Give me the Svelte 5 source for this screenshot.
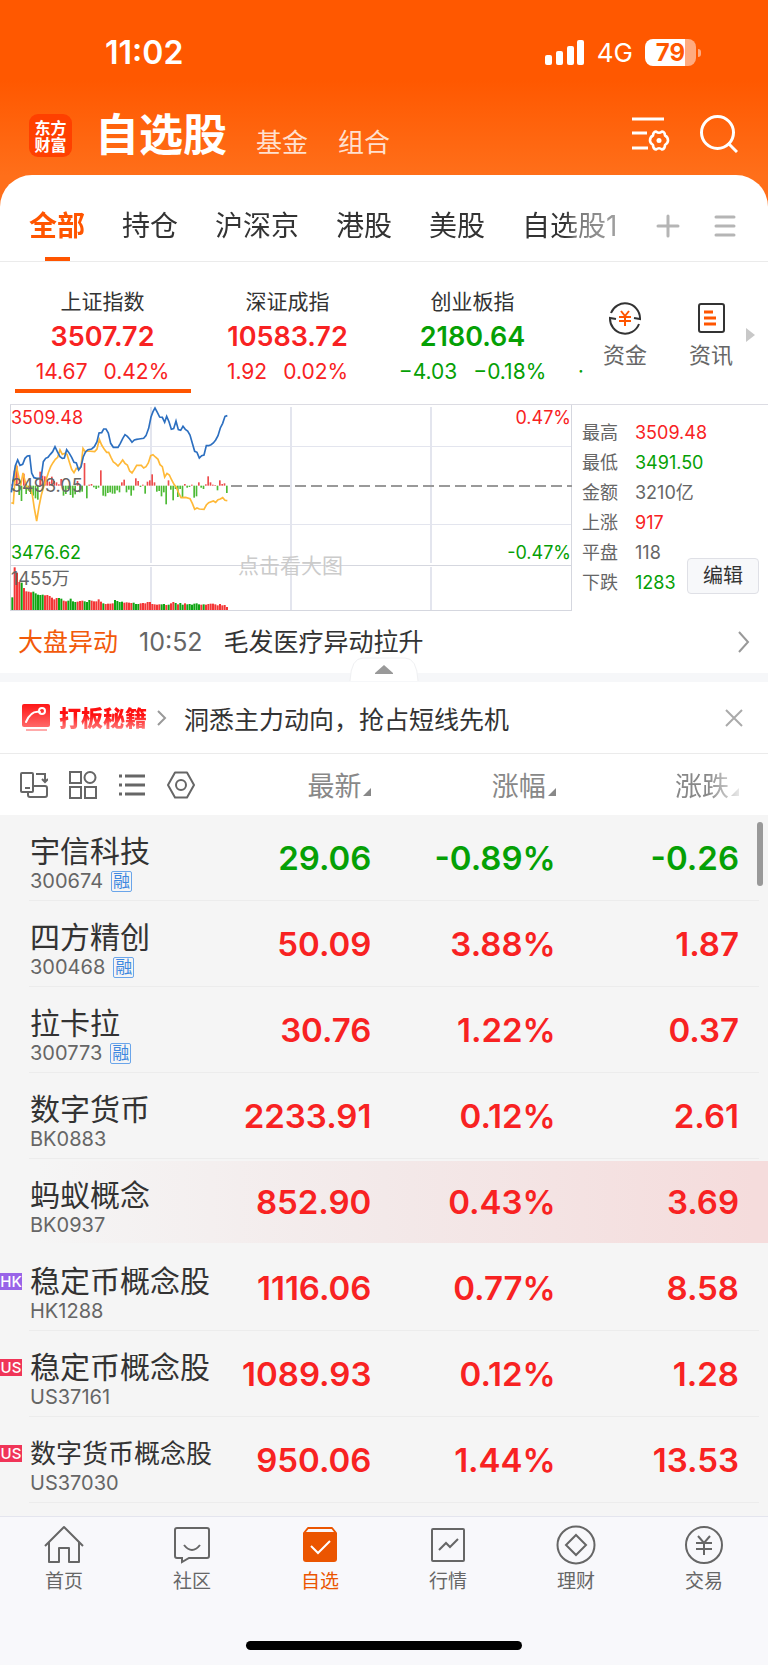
<script>
    let tabs = ["全部", "持仓", "沪深京", "港股", "美股", "自选股1"];
    let activeTab = "全部";

    let indexes = [
        { name: "上证指数", value: "3507.72", change: "14.67", percent: "0.42%", trend: "up" },
        { name: "深证成指", value: "10583.72", change: "1.92", percent: "0.02%", trend: "up" },
        { name: "创业板指", value: "2180.64", change: "−4.03", percent: "−0.18%", trend: "down" },
    ];
    let activeIndex = "上证指数";

    let stats = [
        { label: "最高", value: "3509.48", trend: "up" },
        { label: "最低", value: "3491.50", trend: "down" },
        { label: "金额", value: "3210亿", trend: "flat" },
        { label: "上涨", value: "917", trend: "up" },
        { label: "平盘", value: "118", trend: "flat" },
        { label: "下跌", value: "1283", trend: "down" },
    ];

    let columns = ["最新", "涨幅", "涨跌"];

    let stocks = [
        { name: "宇信科技", code: "300674", margin: true, last: "29.06", percent: "-0.89%", change: "-0.26" },
        { name: "四方精创", code: "300468", margin: true, last: "50.09", percent: "3.88%", change: "1.87" },
        { name: "拉卡拉", code: "300773", margin: true, last: "30.76", percent: "1.22%", change: "0.37" },
        { name: "数字货币", code: "BK0883", last: "2233.91", percent: "0.12%", change: "2.61" },
        { name: "蚂蚁概念", code: "BK0937", last: "852.90", percent: "0.43%", change: "3.69", flash: true },
        { name: "稳定币概念股", code: "HK1288", market: "HK", last: "1116.06", percent: "0.77%", change: "8.58" },
        { name: "稳定币概念股", code: "US37161", market: "US", last: "1089.93", percent: "0.12%", change: "1.28" },
        { name: "数字货币概念股", code: "US37030", market: "US", last: "950.06", percent: "1.44%", change: "13.53" },
    ];

    // the chart is plotted on a fine grid, three units to a pixel
    let priceLine =
        "34,292 40,250 46,212 53,195 60,211 68,208 75,190 82,183 89,182 95,234 102,248 110,250 123,250 130,200 137,190 144,187 151,178 158,170 165,155 172,170 180,185 187,190 193,189 200,164 208,175 215,187 222,202 229,204 236,225 243,216 250,185 257,170 264,164 275,162 283,155 291,140 297,114 305,113 311,102 318,102 325,114 332,145 340,157 354,157 361,145 368,131 375,119 382,124 389,132 396,142 403,135 410,133 417,132 431,130 438,122 446,100 453,66 459,50 465,39 472,52 479,66 487,67 494,82 500,64 507,80 514,103 521,101 528,78 535,104 542,106 549,94 556,103 563,108 570,120 577,145 584,169 591,172 598,189 605,182 612,180 619,152 626,152 633,149 640,144 647,135 654,122 661,99 668,85 675,64 682,62";
    let averageLine =
        "34,323 40,325 48,208 55,240 62,272 69,234 76,262 83,280 90,275 97,300 103,340 110,378 117,335 124,300 131,275 138,255 145,233 152,215 159,203 166,193 173,187 180,165 187,178 194,175 201,178 208,201 215,223 222,233 229,220 236,222 243,214 249,160 256,171 263,168 284,170 291,162 298,133 305,150 313,163 320,172 326,172 333,187 340,201 347,206 354,213 361,205 368,195 375,205 382,210 389,228 396,234 403,223 410,211 424,211 431,219 438,215 445,204 452,182 459,179 466,186 474,193 480,209 487,215 494,246 501,235 508,240 515,255 522,268 529,277 536,294 543,308 557,307 570,311 577,325 584,343 591,339 598,342 612,343 619,330 626,323 640,318 647,322 654,314 661,312 668,308 675,316 682,317";

    let macd = [
        4, 45, 60, -28, -46, 36, -25, -15, -25, -30, -38, -42, 42, 30, 28, 15, 12, 27, 14, 10, 4,
        20, -30, -25, -10, -28, -36, -26, 14, -20, -18, 68, -38, 3, 5, -5, -10, -6, 46, -30, -32, -22,
        -20, -24, -24, -14, -20, 10, 18, -20, -12, -30, -14, 22, 14, -4, 3, -24, 12, 16, 34, 10, -18,
        -16, -32, -20, -56, 16, -12, -44, -10, -34, -10, -36, 5, -6, -4, 3, -36, -32, 10, -6, -10, 4,
        28, 10, 3, 2, -14, 16, 5, 7, -22,
    ];

    let volume = [
        38, 128, 112, 84, 82, 66, 56, 55, 53, 55, 50, 46, 45, 46, 44, 45, 42, 37, 32, 36, 36, 34, 28,
        26, 28, 34, 26, 24, 25, 27, 28, 26, 24, 30, 28, 26, 26, 32, 25, 20, 18, 19, 19, 20, 30, 27,
        24, 25, 22, 23, 22, 21, 22, 18, 18, 20, 21, 20, 24, 24, 18, 17, 16, 17, 17, 18, 15, 16, 20,
        24, 21, 17, 21, 16, 20, 17, 18, 16, 19, 20, 17, 16, 17, 16, 18, 19, 19, 17, 14, 18, 14, 15, 9,
    ];
    let volumeColors =
        "grrrgrrrrgggggrrrrrrggrrggggrrrgggrrrrrgrrrrggggrrrrgggrrrrrrrrrggrgrrgrggrggggggrgrrrrrrrrrr";

    let nav = ["首页", "社区", "自选", "行情", "理财", "交易"];
    let activeNav = "自选";
</script>

<div class="app">
    <header>
        <div class="status">
            <span class="clock">11:02</span>
            <div class="signals">
                <svg width="40" height="26" viewBox="0 0 40 26" fill="#fff">
                    <rect x="0" y="15" width="7" height="10" rx="2" />
                    <rect x="11" y="11" width="7" height="14" rx="2" />
                    <rect x="22" y="6" width="7" height="19" rx="2" />
                    <rect x="32" y="0" width="7" height="25" rx="2" />
                </svg>
                <span class="network">4G</span>
                <div class="battery"><span>79</span></div>
            </div>
        </div>
        <div class="title-row">
            <div class="logo">东方<br />财富</div>
            <h1>自选股</h1>
            <a href="#fund">基金</a>
            <a href="#group">组合</a>
            <div class="tools">
                <button aria-label="设置">
                    <svg width="38" height="36" viewBox="0 0 38 36" fill="none" stroke="#fff" stroke-width="3">
                        <path d="M0 3h32M0 17h15M0 32h16" />
                        <path
                            d="M24 15.500Q27 18 30 15.500Q33 16 33 19.500Q36 21 36 24.500Q36 27 33 29Q33 33 30 33.500Q27 31 24 33.500Q21 33 21 29Q18 27 18 24.500Q18 21 21 19.500Q21 16 24 15.500Z"
                            stroke-width="2.600"
                            stroke-linejoin="round"
                        />
                        <circle cx="27" cy="24.500" r="2.500" fill="#fff" stroke="none" />
                    </svg>
                </button>
                <button aria-label="搜索">
                    <svg width="38" height="38" viewBox="0 0 38 38" fill="none" stroke="#fff" stroke-width="3">
                        <circle cx="17.500" cy="17.500" r="16" />
                        <path d="M28 28l9 9" />
                    </svg>
                </button>
            </div>
        </div>
    </header>

    <main>
        <div class="tabs">
            <nav>
                {#each tabs as tab}
                    <button class:active={tab === activeTab} on:click={() => (activeTab = tab)}>{tab}</button>
                {/each}
            </nav>
            <button aria-label="添加">
                <svg width="24" height="24" viewBox="0 0 24 24" stroke="#b5b5b5" stroke-width="3" stroke-linecap="round">
                    <path d="M12 2v20M2 12h20" />
                </svg>
            </button>
            <button aria-label="管理">
                <svg width="24" height="24" viewBox="0 0 24 24" stroke="#b5b5b5" stroke-width="3" stroke-linecap="round">
                    <path d="M3 3h18M3 12h18M3 21h18" />
                </svg>
            </button>
        </div>

        <section class="indexes">
            <div class="index-list">
                {#each indexes as item}
                    <button class="index" class:active={item.name === activeIndex} on:click={() => (activeIndex = item.name)}>
                        <span class="index-name">{item.name}</span>
                        <strong class={item.trend}>{item.value}</strong>
                        <span class="index-change {item.trend}">
                            <span>{item.change}</span>
                            <span>{item.percent}</span>
                        </span>
                    </button>
                {/each}
                <span class="more down">·</span>
            </div>
            <div class="shortcuts">
                <a href="#money">
                    <svg width="34" height="34" viewBox="0 0 34 34" fill="none" stroke="#333" stroke-width="2">
                        <path d="M3 12A15 15 0 0 1 32 17V18L26 17" />
                        <path d="M8 18L2 17A15 15 0 0 0 31 23" />
                        <path d="M13 10l4 5 4-5M11 16h12M11 20h12M17 15v10" stroke="#ff5500" />
                    </svg>
                    资金
                </a>
                <a href="#news">
                    <svg width="34" height="34" viewBox="0 0 34 34" fill="none" stroke="#333" stroke-width="2">
                        <rect x="5" y="3" width="25" height="28" rx="2" />
                        <path d="M10 11h9M10 17h12M10 23h12" stroke="#ff5500" stroke-width="3" />
                    </svg>
                    资讯
                </a>
            </div>
            <svg class="caret" width="10" height="14" viewBox="0 0 10 14"><path d="M0 0l9 7-9 7z" fill="#c8c8c8" /></svg>
        </section>

        <section class="market">
            <svg class="chart" viewBox="0 0 562 206">
                <g stroke="#e3e5ee" fill="none">
                    <path d="M0 41.500H562M0 119.500H562" />
                    <path d="M141 2V158M281 2V158M421 2V158M141 162V205M281 162V205M421 162V205" stroke-width="2" />
                    <path d="M0 160.500H562M0 205.500H562M.5 0V206M561.500 0V206" stroke="#d5d7df" />
                </g>
                <text x="228" y="168" font-size="21" fill="#cbcbcb">点击看大图</text>
                <path d="M221 81H562" stroke="#999" stroke-width="2" stroke-dasharray="11 5" />
                <g transform="translate(-10 -10) scale(0.333333)">
                    {#each macd as value, i}
                        <rect
                            x={34 + i * 7}
                            y={value > 0 ? 272 - value : 272}
                            width="5"
                            height={Math.abs(value)}
                            fill={value > 0 ? "#ee4b4b" : "#4dba35"}
                        />
                    {/each}
                    {#each volume as value, i}
                        <rect
                            x={34 + i * 7}
                            y={645 - value}
                            width="6"
                            height={value}
                            fill={volumeColors[i] === "g" ? "#0fa513" : "#f43636"}
                        />
                    {/each}
                    <polyline points={averageLine} fill="none" stroke="#ffb938" stroke-width="5" />
                    <polyline points={priceLine} fill="none" stroke="#2c6fc0" stroke-width="5" />
                </g>
                <g font-size="18">
                    <text x="1" y="19" fill="#f82222">3509.48</text>
                    <text x="1" y="87" fill="#666">3493.05</text>
                    <text x="1" y="154" fill="#05a005">3476.62</text>
                    <text x="1" y="180" fill="#666">1455万</text>
                    <text x="561" y="19" fill="#f82222" text-anchor="end">0.47%</text>
                    <text x="561" y="154" fill="#05a005" text-anchor="end">-0.47%</text>
                </g>
            </svg>
            <div class="stats">
                <dl>
                    {#each stats as stat}
                        <dt>{stat.label}</dt>
                        <dd class={stat.trend}>{stat.value}</dd>
                    {/each}
                </dl>
                <button class="edit">编辑</button>
            </div>
        </section>

        <section class="news">
            <a href="#alert">
                <span class="news-tag">大盘异动</span>
                <time>10:52</time>
                <span>毛发医疗异动拉升</span>
            </a>
            <svg width="12" height="22" viewBox="0 0 12 22" fill="none" stroke="#999" stroke-width="2"><path d="M1 1l9 10-9 10" /></svg>
            <button class="handle" aria-label="收起">
                <svg width="70" height="25" viewBox="0 0 70 25">
                    <path d="M1 24Q2 1 14 1H56Q68 1 69 24" fill="#fff" stroke="#eff0f2" stroke-width="1" />
                    <path d="M35 8l9 8v1H26v-1z" fill="#999" />
                </svg>
            </button>
        </section>

        <section class="promo">
            <svg width="30" height="28" viewBox="0 0 30 28">
                <defs>
                    <linearGradient id="promo-red" x1="0" y1="0" x2="0" y2="1">
                        <stop offset="0" stop-color="#ff1717" />
                        <stop offset="1" stop-color="#ff6868" />
                    </linearGradient>
                </defs>
                <rect x="1" y="0" width="28" height="23" rx="2" fill="url(#promo-red)" />
                <path d="M5 18Q10 6 19 8" fill="none" stroke="#fff" stroke-width="2" stroke-linecap="round" />
                <circle cx="21" cy="7" r="3" fill="none" stroke="#fff" stroke-width="2" />
                <path d="M5 26h21" stroke="#ffaaaa" stroke-width="2" />
            </svg>
            <strong>打板秘籍</strong>
            <svg width="10" height="18" viewBox="0 0 10 18" fill="none" stroke="#999" stroke-width="2"><path d="M1 2l7 7-7 7" /></svg>
            <a href="#promo">洞悉主力动向，抢占短线先机</a>
            <button aria-label="关闭">
                <svg width="18" height="18" viewBox="0 0 18 18" stroke="#aaa" stroke-width="2"><path d="M1 1l16 16M17 1L1 17" /></svg>
            </button>
        </section>

        <section class="watchlist">
            <table>
                <thead>
                    <tr>
                        <th class="name-col">
                            <div class="views">
                                <button aria-label="横屏">
                                    <svg width="28" height="28" viewBox="0 0 28 28" fill="none" stroke="#666" stroke-width="2">
                                        <rect x="1" y="2" width="12" height="19" rx="1" />
                                        <path d="M5 17h5M16 3h9v8M22 8l3 3 3-3M13 15h12q2 0 2 2v7q0 2-2 2H10q-2 0-2-2v-3" />
                                    </svg>
                                </button>
                                <button aria-label="宫格">
                                    <svg width="28" height="28" viewBox="0 0 28 28" fill="none" stroke="#666" stroke-width="2">
                                        <rect x="1" y="1" width="11" height="11" />
                                        <circle cx="21" cy="6.500" r="5.500" />
                                        <rect x="1" y="16" width="11" height="11" />
                                        <rect x="16" y="16" width="11" height="11" />
                                    </svg>
                                </button>
                                <button aria-label="列表">
                                    <svg width="28" height="28" viewBox="0 0 28 28" stroke="#666" stroke-width="3">
                                        <path d="M7 5h20M7 14h20M7 23h20" />
                                        <path d="M1 5h3M1 14h3M1 23h3" />
                                    </svg>
                                </button>
                                <button aria-label="设置">
                                    <svg width="28" height="28" viewBox="0 0 28 28" fill="none" stroke="#666" stroke-width="2">
                                        <path d="M8 1.500h12l7 12.500-7 12.500H8L1 14z" stroke-linejoin="round" />
                                        <circle cx="14" cy="14" r="5" />
                                    </svg>
                                </button>
                            </div>
                        </th>
                        {#each columns as column}
                            <th><button class="sort">{column}<i></i></button></th>
                        {/each}
                    </tr>
                </thead>
                <tbody>
                    {#each stocks as stock}
                        <tr class:flash={stock.flash}>
                            <td>
                                {#if stock.market}
                                    <span class="market-tag {stock.market}">{stock.market}</span>
                                {/if}
                                <div class="name" class:long={stock.name.length > 6}>{stock.name}</div>
                                <div class="code">
                                    {stock.code}
                                    {#if stock.margin}<span class="margin-tag">融</span>{/if}
                                </div>
                            </td>
                            {#each [stock.last, stock.percent, stock.change] as value}
                                <td class="value {stock.change[0] === '-' ? 'down' : 'up'}">{value}</td>
                            {/each}
                        </tr>
                    {/each}
                </tbody>
            </table>
            <div class="scrollbar"></div>
        </section>
    </main>

    <footer>
        <nav>
            {#each nav as item, i}
                <a href="#{i}" class:active={item === activeNav}>
                    <svg width="40" height="40" viewBox="0 0 40 40" fill="none" stroke="currentColor" stroke-width="2">
                        {#if i === 0}
                            <path d="M1 21L20 2l19 19M5 17v20h10V23h10v14h10V17" stroke-linejoin="round" />
                        {:else if i === 1}
                            <path d="M5 3h30q2 0 2 2v26q0 2-2 2H17l-7 4v-4H5q-2 0-2-2V5q0-2 2-2Z" />
                            <path d="M12 20q8 10 16 0" />
                        {:else if i === 2}
                            <path d="M8 3h24l4 5H4z" stroke-linejoin="round" />
                            <path d="M3 8h34v26q0 3-3 3H6q-3 0-3-3z" fill="currentColor" stroke="none" />
                            <path d="M11 21l7 7 12-12" stroke="#fff" />
                        {:else if i === 3}
                            <rect x="4" y="4" width="32" height="32" rx="1" />
                            <path d="M11 25l7-7 4 4 8-8" />
                        {:else if i === 4}
                            <circle cx="20" cy="20" r="18.500" />
                            <path d="M20 10l10 10-10 10-10-10z" />
                        {:else}
                            <circle cx="20" cy="20" r="18" />
                            <path d="M14 11l6 7 6-7M12 18h16M12 24h16M20 18v12" />
                        {/if}
                    </svg>
                    {item}
                </a>
            {/each}
        </nav>
        <div class="home-bar"></div>
    </footer>
</div>

<style>
    :global(body) {
        margin: 0;
        background: #f8f8fb;
    }
    .app {
        font-family: Inter, "Noto Sans CJK SC", sans-serif;
        color: #333;
        background: linear-gradient(#ff5800 80px, #ff6f1a 176px);
    }
    button {
        padding: 0;
        border: 0;
        background: none;
        font: inherit;
        color: inherit;
    }
    a {
        color: inherit;
        text-decoration: none;
    }
    svg {
        display: block;
    }
    .up {
        color: #f82222;
    }
    .down {
        color: #05a005;
    }
    .flat {
        color: #666;
    }

    header {
        color: #fff;
    }
    .status {
        display: flex;
        justify-content: space-between;
        align-items: center;
        height: 105px;
        padding: 0 66px 0 105px;
    }
    .clock {
        font-size: 32px;
        font-weight: 600;
    }
    .signals {
        display: flex;
        align-items: center;
        gap: 12px;
    }
    .network {
        font-size: 26px;
    }
    .battery {
        position: relative;
        width: 51px;
        height: 27px;
        margin-right: 6px;
        border-radius: 8px;
        background: linear-gradient(90deg, #fff 40px, #ffab80 40px);
        color: #ff5800;
        font-size: 24px;
        font-weight: 700;
        line-height: 27px;
        text-align: center;
    }
    .battery::after {
        content: "";
        position: absolute;
        right: -5px;
        top: 10px;
        width: 3px;
        height: 8px;
        border-radius: 0 4px 4px 0;
        background: #ffab80;
    }
    .title-row {
        display: flex;
        align-items: center;
        height: 70px;
        padding: 0 30px 0 29px;
    }
    .logo {
        width: 43px;
        height: 37px;
        padding-top: 6px;
        margin-bottom: 10px;
        border-radius: 9px;
        background: #ff4000;
        font-size: 16px;
        font-weight: 700;
        line-height: 17px;
        text-align: center;
    }
    h1 {
        margin: 0 29px 10px 23px;
        font-size: 44px;
        font-weight: 600;
        line-height: 60px;
    }
    .title-row a {
        margin-right: 30px;
        font-size: 26px;
        color: #ffe0cf;
    }
    .tools {
        display: flex;
        gap: 30px;
        margin: 0 0 12px auto;
    }

    main {
        overflow: hidden;
        border-radius: 32px 32px 0 0;
        background: #fff;
    }
    .tabs {
        display: flex;
        align-items: center;
        gap: 33px;
        height: 70px;
        padding: 16px 31px 0 29px;
        border-bottom: 1px solid #ebebeb;
    }
    .tabs nav {
        flex: 1;
        display: flex;
        gap: 37px;
        min-width: 0;
        overflow: hidden;
        white-space: nowrap;
        font-size: 28px;
        line-height: 70px;
        mask-image: linear-gradient(90deg, #000 536px, #000a 546px, #0006 600px);
    }
    .tabs nav button.active {
        color: #ff5500;
        font-weight: 600;
        background: linear-gradient(#ff5500, #ff5500) center bottom / 25px 4px no-repeat;
    }

    .indexes {
        display: flex;
        align-items: center;
        height: 142px;
    }
    .index-list {
        flex: 1;
        display: flex;
        min-width: 0;
        padding-left: 10px;
        overflow: hidden;
    }
    .index {
        flex: 0 0 185px;
        display: flex;
        flex-direction: column;
        align-items: center;
        justify-content: flex-start;
        height: 120px;
        padding-top: 14px;
        white-space: nowrap;
    }
    .index.active {
        background: linear-gradient(#ff5500, #ff5500) center bottom / 176px 4px no-repeat;
    }
    .index-name {
        font-size: 21px;
        line-height: 30px;
    }
    .index strong {
        font-size: 27px;
        font-weight: 600;
        line-height: 39px;
    }
    .index-change {
        display: flex;
        gap: 16px;
        font-size: 21px;
        line-height: 31px;
    }
    .more {
        align-self: flex-end;
        padding-left: 13px;
        font-size: 20px;
        line-height: 44px;
    }
    .shortcuts {
        display: flex;
        gap: 42px;
        padding: 6px 13px 0 17px;
        font-size: 22px;
        line-height: 34px;
        color: #666;
    }
    .shortcuts a {
        display: flex;
        flex-direction: column;
        align-items: center;
        gap: 3px;
    }
    .caret {
        margin: 4px 12px 0 0;
    }

    .market {
        display: flex;
        margin-left: 10px;
        border-top: 1px solid #dcdce3;
    }
    .chart {
        flex: 562;
        min-width: 0;
    }
    .stats {
        flex: 196;
        position: relative;
    }
    dl {
        display: grid;
        grid-template-columns: 53px 1fr;
        margin: 13px 0 0 10px;
        font-size: 18px;
        line-height: 30px;
    }
    dt {
        color: #666;
    }
    dd {
        margin: 0;
    }
    .edit {
        position: absolute;
        right: 9px;
        bottom: 17px;
        width: 72px;
        height: 36px;
        border: 1px solid #dfe0e6;
        border-radius: 4px;
        background: #f7f8fa;
        font-size: 20px;
        line-height: 32px;
    }

    .news {
        position: relative;
        display: flex;
        align-items: center;
        justify-content: space-between;
        height: 62px;
        padding: 0 18px;
        border-bottom: 9px solid #f6f7f9;
        font-size: 25px;
        line-height: 34px;
    }
    .news a {
        display: flex;
        align-items: baseline;
        gap: 21px;
    }
    .news-tag {
        color: #f25a0a;
    }
    time {
        color: #666;
    }
    .handle {
        position: absolute;
        left: calc(50% - 35px);
        bottom: -9px;
    }

    .promo {
        display: flex;
        align-items: center;
        height: 71px;
        padding: 0 25px 0 21px;
        border-bottom: 1px solid #ebebeb;
        font-size: 25px;
    }
    .promo strong {
        margin: 0 10px 0 8px;
        font-size: 22px;
        font-weight: 900;
        line-height: 32px;
        background: linear-gradient(#ff1010 40%, #ff7070 80%);
        background-clip: text;
        color: transparent;
    }
    .promo a {
        flex: 1;
        margin-left: 17px;
    }

    .watchlist {
        position: relative;
        padding-bottom: 13px;
        background: #f5f5f5;
    }
    table {
        width: 100%;
        table-layout: fixed;
        border-collapse: collapse;
    }
    thead {
        background: #fff;
    }
    .name-col {
        width: 30%;
    }
    th {
        height: 61px;
        padding: 0;
        font-weight: 400;
        text-align: right;
    }
    th:nth-child(2) {
        width: 141px;
    }
    th:nth-child(3) {
        width: 24%;
    }
    th:last-child,
    td:last-child {
        padding-right: 29px;
    }
    th:last-child .sort {
        mask-image: linear-gradient(90deg, #000 50%, #0003);
    }
    .views {
        display: flex;
        gap: 21px;
        padding-left: 20px;
    }
    .sort {
        color: #888;
        font-size: 27px;
    }
    .sort i {
        display: inline-block;
        margin-left: 2px;
        border-left: 8px solid transparent;
        border-bottom: 8px solid #888;
    }
    tbody tr {
        height: 86px;
        background: linear-gradient(#ececec, #ececec) 29px bottom / calc(100% - 38px) 1px no-repeat;
    }
    tbody tr.flash {
        background: linear-gradient(90deg, #f5f5f5 5%, #f3e9e9 50%, #f5dcdc 98%) center / 100% 82px no-repeat;
    }
    td {
        position: relative;
        padding: 0;
        white-space: nowrap;
    }
    .name {
        padding: 9px 0 0 30px;
        font-size: 30px;
        line-height: 37px;
    }
    .name.long {
        font-size: 26px;
    }
    .code {
        display: flex;
        align-items: center;
        gap: 8px;
        height: 22px;
        padding-left: 30px;
        color: #666;
        font-size: 20px;
    }
    .margin-tag {
        border: 1px solid #6aa5ea;
        border-radius: 2px;
        padding: 0 1px;
        color: #3f88e0;
        font-size: 17px;
        line-height: 19px;
    }
    .market-tag {
        position: absolute;
        left: 0;
        top: 28px;
        width: 22px;
        color: #fff;
        font-size: 15px;
        font-weight: 500;
        line-height: 17px;
        text-align: center;
    }
    .HK {
        background: #9964e8;
    }
    .US {
        background: #f03558;
    }
    .value {
        font-size: 33px;
        font-weight: 600;
        text-align: right;
    }
    .scrollbar {
        position: absolute;
        top: 68px;
        right: 5px;
        width: 6px;
        height: 64px;
        border-radius: 3px;
        background: #999;
    }

    footer {
        padding: 8px 0 15px;
        border-top: 1px solid #e4e5ee;
        background: #f8f8fb;
    }
    footer nav {
        display: flex;
        height: 116px;
    }
    footer a {
        flex: 1;
        display: flex;
        flex-direction: column;
        align-items: center;
        color: #666;
        font-size: 19px;
        line-height: 34px;
    }
    footer a.active {
        color: #eb5500;
    }
    .home-bar {
        width: 36%;
        height: 9px;
        margin: 0 auto;
        border-radius: 5px;
        background: #000;
    }
</style>
